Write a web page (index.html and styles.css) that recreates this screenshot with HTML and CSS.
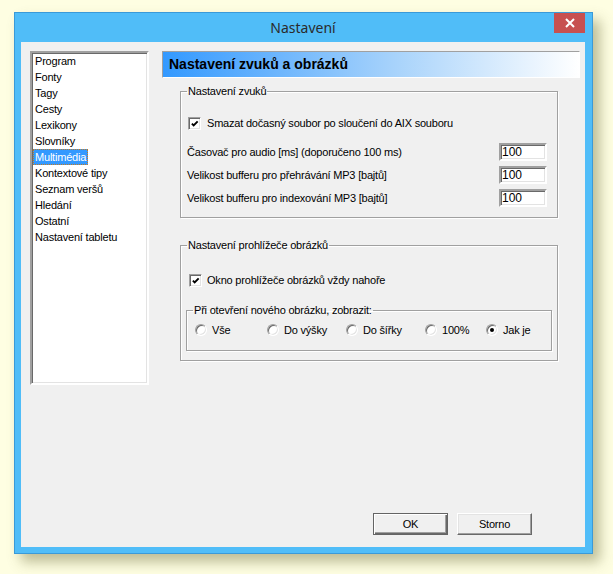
FILE: index.html
```html
<!DOCTYPE html>
<html lang="cs">
<head>
<meta charset="utf-8">
<title>Nastavení</title>
<link rel="stylesheet" href="styles.css">
</head>
<body>
<div class="window">
  <div class="titlebar">
    <span class="title">Nastavení</span>
    <div class="close"><svg width="10" height="10" viewBox="0 0 10 10"><path d="M1 1 L9 9 M9 1 L1 9" stroke="#fff" stroke-width="2" fill="none"/></svg></div>
  </div>
  <div class="client">
    <ul class="list">
      <li><span>Program</span></li>
      <li><span>Fonty</span></li>
      <li><span>Tagy</span></li>
      <li><span>Cesty</span></li>
      <li><span>Lexikony</span></li>
      <li><span>Slovníky</span></li>
      <li><span class="sel">Multimédia</span></li>
      <li><span>Kontextové tipy</span></li>
      <li><span>Seznam veršů</span></li>
      <li><span>Hledání</span></li>
      <li><span>Ostatní</span></li>
      <li><span>Nastavení tabletu</span></li>
    </ul>
    <div class="panel">
      <div class="header">Nastavení zvuků a obrázků</div>
      <fieldset class="group g1">
        <legend>Nastavení zvuků</legend>
        <div class="check"><span class="box"><svg width="9" height="9" viewBox="0 0 9 9"><path d="M1 3.5 L3 5.5 L7.5 1" stroke="#000" stroke-width="2.2" fill="none"/></svg></span><span>Smazat dočasný soubor po sloučení do AIX souboru</span></div>
        <div class="rows">
          <div class="row"><span>Časovač pro audio [ms] (doporučeno 100 ms)</span><span class="input">100</span></div>
          <div class="row"><span>Velikost bufferu pro přehrávání MP3 [bajtů]</span><span class="input">100</span></div>
          <div class="row"><span>Velikost bufferu pro indexování MP3 [bajtů]</span><span class="input">100</span></div>
        </div>
      </fieldset>
      <fieldset class="group g2">
        <legend>Nastavení prohlížeče obrázků</legend>
        <div class="check c2"><span class="box"><svg width="9" height="9" viewBox="0 0 9 9"><path d="M1 3.5 L3 5.5 L7.5 1" stroke="#000" stroke-width="2.2" fill="none"/></svg></span><span>Okno prohlížeče obrázků vždy nahoře</span></div>
        <fieldset class="group inner">
          <legend>Při otevření nového obrázku, zobrazit:</legend>
          <div class="radios">
            <div class="radio"><span class="circle"></span><span>Vše</span></div>
            <div class="radio"><span class="circle"></span><span>Do výšky</span></div>
            <div class="radio"><span class="circle"></span><span>Do šířky</span></div>
            <div class="radio"><span class="circle"></span><span>100%</span></div>
            <div class="radio"><span class="circle on"></span><span>Jak je</span></div>
          </div>
        </fieldset>
      </fieldset>
      <div class="buttons">
        <div class="btn default">OK</div>
        <div class="btn">Storno</div>
      </div>
    </div>
  </div>
</div>
</body>
</html>
```
FILE: styles.css
```css
* { box-sizing: border-box; }
html, body { margin: 0; padding: 0; }
body {
  background: #fefee2;
  font-family: "Liberation Sans", Arial, sans-serif;
  font-size: 11px;
  letter-spacing: -0.2px;
  color: #000;
  width: 613px;
  height: 574px;
  overflow: hidden;
}
.window {
  margin: 12px 0 0 14px;
  width: 579px;
  height: 542px;
  background: #50bdf8;
  border: 1px solid #3a9ad8;
  box-shadow: 7px 8px 12px rgba(110, 110, 60, 0.45);
  padding: 0 7px 6px 6px;
  display: flex;
  flex-direction: column;
}
.titlebar {
  height: 29px;
  position: relative;
  display: flex;
  align-items: center;
  justify-content: center;
}
.title {
  font-family: "Noto Sans", "Open Sans", sans-serif;
  font-size: 14px;
  letter-spacing: 0;
  color: #2b2b2b;
  margin-top: -1px;
}
.close {
  position: absolute;
  top: 0;
  right: 0;
  width: 31px;
  height: 20px;
  background: #c75050;
  display: flex;
  align-items: center;
  justify-content: center;
}
.client {
  flex: 1;
  background: #f0f0f0;
  display: flex;
  padding: 9px 5px 12px 9px;
  gap: 13px;
}
.list {
  list-style: none;
  margin: 0;
  padding: 0;
  width: 119px;
  height: 334px;
  background: #fff;
  border: 2px solid;
  border-color: #a0a0a0 #fff #fff #a0a0a0;
  box-shadow: inset 1px 1px 0 #696969, inset -1px -1px 0 #e3e3e3;
}
.list li {
  height: 16px;
  line-height: 16px;
  padding-left: 1px;
  white-space: nowrap;
}
.list li span {
  display: inline-block;
  padding: 0 2px;
  height: 16px;
}
.list li span.sel {
  background: #3399ff;
  color: #fff;
  outline: 1px dotted #c67a1e;
  outline-offset: -1px;
}
.panel {
  flex: 1;
  display: flex;
  flex-direction: column;
}
.header {
  height: 27px;
  border: 1px solid;
  border-color: #a0a0a0 #fff #fff #a0a0a0;
  background: linear-gradient(to right, #3399ff 0%, #a6d2fb 55%, #ffffff 100%);
  font-weight: bold;
  font-size: 14px;
  letter-spacing: 0;
  line-height: 24px;
  padding-left: 6px;
}
.group {
  margin: 0;
  padding: 0;
  border: 1px solid #a0a0a0;
  box-shadow: inset 1px 1px 0 #fff, 1px 1px 0 #fff;
  min-width: 0;
}
.group legend {
  margin-left: 6px;
  padding: 0 1px;
  line-height: 13px;
  height: 13px;
}
.g1, .g2 {
  margin-left: 18px;
  width: 378px;
}
.g1 { margin-top: 7px; padding-bottom: 10px; }
.g2 { margin-top: 21px; }
.check {
  display: flex;
  align-items: center;
  gap: 6px;
  height: 13px;
  margin: 19px 0 0 7px;
  line-height: 13px;
}
.check.c2 { margin: 22px 0 0 8px; gap: 5px; }
.box {
  width: 13px;
  height: 13px;
  background: #fff;
  border: 1px solid;
  border-color: #a0a0a0 #fff #fff #a0a0a0;
  box-shadow: inset 1px 1px 0 #696969, inset -1px -1px 0 #e3e3e3;
  padding: 1px;
  display: flex;
}
.box svg { margin: 1px 0 0 1px; }
.rows {
  margin-top: 13px;
  display: flex;
  flex-direction: column;
  gap: 5px;
}
.row {
  height: 18px;
  display: flex;
  align-items: center;
  justify-content: space-between;
  padding: 0 10px 0 6px;
}
.input {
  width: 48px;
  height: 18px;
  background: #fff;
  border: 2px solid;
  border-color: #a0a0a0 #fff #fff #a0a0a0;
  box-shadow: inset 1px 1px 0 #696969, inset -1px -1px 0 #e3e3e3;
  font-size: 12px;
  letter-spacing: 0;
  line-height: 15px;
  padding-left: 1px;
}
.inner {
  margin: 17px 5px 9px 5px;
  padding-bottom: 14px;
}
.radios {
  margin-top: 7px;
  padding-left: 8px;
  display: grid;
  grid-template-columns: 72px 79px 79px 61px auto;
  height: 12px;
}
.radio {
  display: flex;
  align-items: center;
  gap: 5px;
  height: 12px;
  line-height: 12px;
}
.circle {
  width: 12px;
  height: 12px;
  border-radius: 50%;
  background: #fff;
  border: 1px solid;
  border-color: #a0a0a0 #fff #fff #a0a0a0;
  box-shadow: inset 1px 1px 0 #696969, inset -1px -1px 0 #e3e3e3;
  display: flex;
  align-items: center;
  justify-content: center;
}
.circle.on::after {
  content: "";
  width: 4px;
  height: 4px;
  border-radius: 50%;
  background: #000;
}
.buttons {
  margin-top: auto;
  display: flex;
  justify-content: flex-end;
  gap: 9px;
  margin-right: 48px;
}
.btn {
  width: 75px;
  height: 22px;
  background: #f0f0f0;
  border: 1px solid;
  border-color: #fff #696969 #696969 #fff;
  box-shadow: inset -1px -1px 0 #a0a0a0, inset 1px 1px 0 #e3e3e3;
  display: flex;
  align-items: center;
  justify-content: center;
  line-height: 13px;
  font-size: 11px;
}
.btn.default {
  border: 1px solid #646464;
  box-shadow: inset 1px 1px 0 #fff, inset -1px -1px 0 #696969, inset -2px -2px 0 #a0a0a0;
}
```
